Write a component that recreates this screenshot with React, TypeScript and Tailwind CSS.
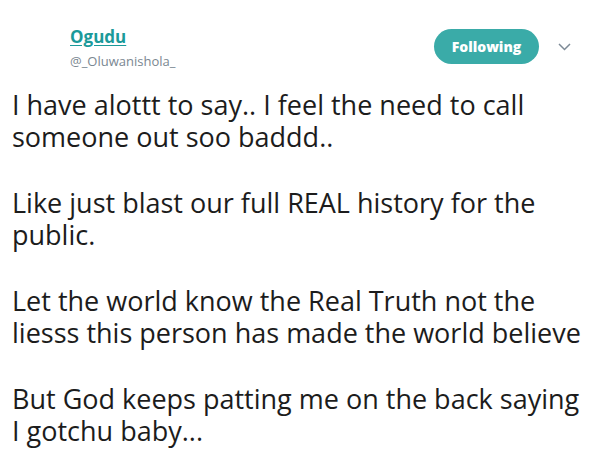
const paragraphs = [
  ["I have alottt to say.. I feel the need to call", "someone out soo baddd.."],
  ["Like just blast our full REAL history for the", "public."],
  ["Let the world know the Real Truth not the", "liesss this person has made the world believe"],
  ["But God keeps patting me on the back saying", "I gotchu baby..."],
];

export default function App() {
  return (
    <div className="w-[600px] h-[452px] bg-white overflow-hidden font-['Open_Sans',sans-serif]">
      {/* Header */}
      <div className="flex items-start pl-[70px] pr-[29px] pt-[27px]">
        <div className="flex-1 flex flex-col">
          <a className="text-[17px] leading-[20px] font-bold text-[#1b9a9a] underline underline-offset-2 w-fit">
            Ogudu
          </a>
          <span className="text-[13px] leading-[18px] text-[#7a8791] mt-[5px]">@_Oluwanishola_</span>
        </div>
        <button className="mt-[2px] w-[105px] h-[35px] rounded-full bg-[#3aaba8] text-white text-[14px] font-extrabold">
          Following
        </button>
        <svg className="ml-[19px] mt-[16px]" width="13" height="8" viewBox="0 0 13 8" fill="none">
          <polyline points="1,1 6.5,6.5 12,1" stroke="#7d8a96" strokeWidth="1.5" />
        </svg>
      </div>

      {/* Tweet body */}
      <div className="pl-[12px] pt-[19px] text-[27px] leading-[32px] text-[#1c1c1c]">
        {paragraphs.map((p, i) => (
          <div key={i} className={i > 0 ? "mt-[34px]" : ""}>
            {p.map((line) => (
              <div key={line} className="whitespace-nowrap">{line}</div>
            ))}
          </div>
        ))}
      </div>
    </div>
  );
}
